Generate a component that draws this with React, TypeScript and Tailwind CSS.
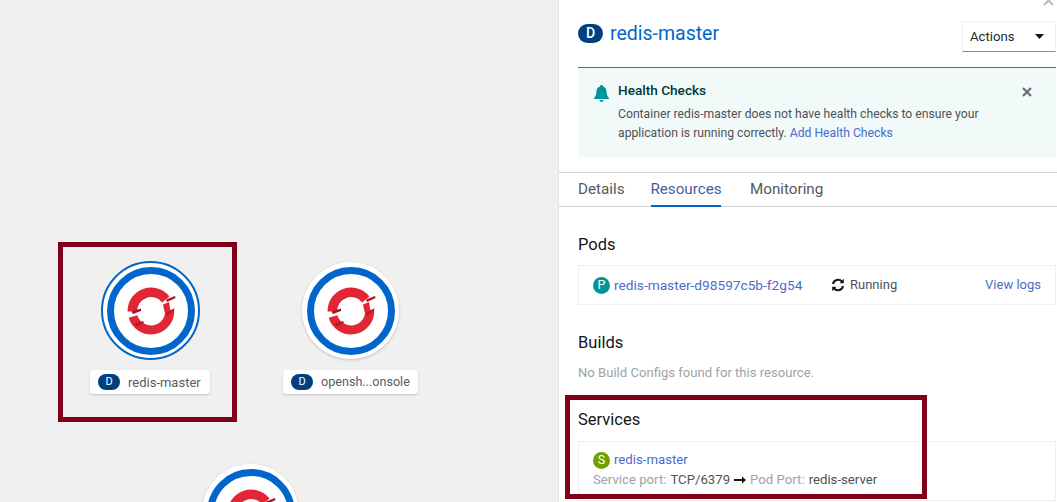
const font = { fontFamily: "Roboto, 'Liberation Sans', sans-serif" };

function Logo() {
  // OpenShift mark: two interlocking arcs with darker fold marks
  return (
    <svg width="60" height="60" viewBox="-30 -30 60 60" className="block">
      <path d="M 14.8 -11.5 A 18.75 18.75 0 0 0 -18.7 0.5" fill="none" stroke="#e12634" strokeWidth="9.5" />
      <path d="M -18 5.5 A 18.75 18.75 0 0 0 18.7 -1" fill="none" stroke="#e12634" strokeWidth="9" />
      <path d="M 12 -6.5 L 18 -9 L 19.5 0 L 14 3 Z" fill="#e12634" />
      <path d="M 15 -11.5 L 24 -15 L 24.5 -13 L 16 -9 Z" fill="#a8142a" />
      <path d="M 15 2.5 L 23.5 -3 L 23 -0.5 L 15.5 5 Z" fill="#b51a2c" />
      <path d="M -19.5 0.5 L -10 -2.5 L -10 0 L -18 3 Z" fill="#a8142a" />
      <path d="M -17 13 L -8 10 L -7 12 L -14 15.5 Z" fill="#b51a2c" />
    </svg>
  );
}

function Node({ left, top, selected }: { left: number; top: number; selected?: boolean }) {
  return (
    <div
      className={
        selected
          ? "absolute flex h-[99px] w-[99px] items-center justify-center rounded-full border-2 border-[#06c] bg-white"
          : "absolute flex h-[97px] w-[97px] items-center justify-center rounded-full bg-white shadow-[0_1px_3px_rgba(3,3,3,0.2)]"
      }
      style={{ left, top }}
    >
      <div className="flex h-[88px] w-[88px] shrink-0 items-center justify-center rounded-full border-[7px] border-[#06c] bg-white">
        <Logo />
      </div>
    </div>
  );
}

function NodeLabel({ left, width, text, size }: { left: number; width: number; text: string; size: number }) {
  return (
    <div
      className="absolute top-[370px] flex h-6 items-center rounded-[3px] bg-white pl-2 text-[#5a5d60] shadow-[0_1px_2px_rgba(3,3,3,0.2)]"
      style={{ left, width, fontSize: size }}
    >
      <span className="mr-2 flex h-4 w-[22px] items-center justify-center rounded-full bg-[#004080] text-[11px] text-white">D</span>
      <span className="pt-px">{text}</span>
    </div>
  );
}

function Badge({ letter, color }: { letter: string; color: string }) {
  return (
    <span
      className="mr-1 flex h-[17px] w-[17px] shrink-0 items-center justify-center rounded-full text-[12.5px] text-white"
      style={{ backgroundColor: color }}
    >
      {letter}
    </span>
  );
}

function Heading({ children }: { children: string }) {
  return <h2 className="text-[16.5px] leading-5 text-[#151515]">{children}</h2>;
}

export default function App() {
  return (
    <div className="relative flex h-[502px] w-[1057px] overflow-hidden bg-white" style={font}>
      <div className="relative h-full w-[558px] shrink-0 bg-[#f0f0f0]">
        <Node left={101} top={261} selected />
        <NodeLabel left={90} width={120} text="redis-master" size={13} />
        <Node left={302} top={262} />
        <NodeLabel left={283} width={135} text="opensh...onsole" size={12.6} />
        <Node left={202} top={464} />
        <div className="absolute left-[58px] top-[242px] h-[180px] w-[179px] border-[5px] border-[#7f0018]" />
      </div>

      <div className="relative flex h-full min-w-0 flex-1 flex-col border-l border-[#e4e4e4]">
        <svg className="absolute right-[3px] top-[-5px]" width="11" height="11" viewBox="0 0 11 11">
          <path d="M1 1 L10 10 M10 1 L1 10" stroke="#b8bbbe" strokeWidth="2" />
        </svg>

        <div className="flex h-[67px] items-start justify-between pl-[19px] pr-px">
          <div className="mt-[23px] flex items-center">
            <span className="mr-[7px] flex h-[19px] w-[25px] items-center justify-center rounded-full bg-[#004080] text-[14px] font-medium text-white">D</span>
            <span className="pt-px text-[19.5px] leading-5 text-[#06c]">redis-master</span>
          </div>
          <div className="mt-[21px] flex h-[31px] w-[94px] items-center border border-[#f0f0f0] border-b-[#8a8d90] pl-[7px] text-[13.2px] text-[#2a2a2a]">
            Actions
            <svg className="ml-[20px]" width="9" height="5" viewBox="0 0 9 5">
              <path d="M0 0 H9 L4.5 5 Z" fill="#151515" />
            </svg>
          </div>
        </div>

        <div className="ml-[19px] mr-px flex h-[90px] border-t border-[#009596] bg-[#f2f9f9] pl-[16px] pt-[16px]">
          <svg className="mt-px shrink-0" width="15" height="17" viewBox="0 0 15 17">
            <path d="M7.5 0 C8.6 0 9 .7 9 1.4 C11.6 2 12.6 4.2 12.6 7 C12.6 10 13.6 11.4 15 13 V14 H0 V13 C1.4 11.4 2.4 10 2.4 7 C2.4 4.2 3.4 2 6 1.4 C6 .7 6.4 0 7.5 0 Z M5.4 15 H9.6 C9.4 16.2 8.6 17 7.5 17 C6.4 17 5.6 16.2 5.4 15 Z" fill="#009596" />
          </svg>
          <div className="ml-[9px] w-[404px] shrink-0">
            <div className="text-[13.6px] font-medium leading-[13px] text-[#003737]">Health Checks</div>
            <p className="mt-2 text-[12.2px] leading-[19px] text-[#4f5255]">
              Container redis-master does not have health checks to ensure your
              <br />
              application is running correctly. <span className="text-[#4a6cc8]">Add Health Checks</span>
            </p>
          </div>
          <svg className="mt-[3px] shrink-0" width="10" height="10" viewBox="0 0 10 10">
            <path d="M1 1 L9 9 M9 1 L1 9" stroke="#6a6e73" strokeWidth="2.2" />
          </svg>
        </div>

        <div className="mt-[15px] flex h-[35px] border-y border-[#d2d2d2] pl-[19px] text-[15.2px] text-[#55585b]">
          <div className="flex h-[33px] w-[46px] items-center">Details</div>
          <div className="-mb-px ml-[27px] flex h-[34px] w-[70px] items-center justify-center border-b-2 border-[#06c] text-[#3f5f9f]">Resources</div>
          <div className="ml-[29px] flex h-[33px] items-center">Monitoring</div>
        </div>

        <div className="flex flex-col pl-[19px] pr-px pt-[28px]">
          <Heading>Pods</Heading>
          <div className="mt-[10px] flex h-10 items-center border border-[#f0f0f0] pl-[14px] pr-[14px] text-[13px]">
            <Badge letter="P" color="#009596" />
            <span className="w-[217px] text-[13.7px] text-[#4a6cc8]">redis-master-d98597c5b-f2g54</span>
            <svg width="14" height="14" viewBox="0 0 14 14" fill="none" stroke="#151515" strokeWidth="2">
              <path d="M2 6 A5.2 5.2 0 0 1 11 3.5" />
              <path d="M12 8 A5.2 5.2 0 0 1 3 10.5" />
              <path d="M12.8 .8 V5.2 H8.6 Z M1.2 13.2 V8.8 H5.4 Z" fill="#151515" stroke="none" />
            </svg>
            <span className="ml-[5px] text-[#4f5255]">Running</span>
            <span className="ml-auto text-[#4a6cc8]">View logs</span>
          </div>

          <div className="mt-[28px]">
            <Heading>Builds</Heading>
          </div>
          <p className="mt-[11px] text-[13.1px] leading-[18px] text-[#a0a3a6]">No Build Configs found for this resource.</p>

          <div className="mt-[28px]">
            <Heading>Services</Heading>
          </div>
          <div className="mt-[11px] h-[60px] border border-[#f0f0f0] pl-[14px] pt-[8px] text-[13.2px] leading-[20px]">
            <div className="flex items-center">
              <Badge letter="S" color="#6ca100" />
              <span className="text-[#4a6cc8]">redis-master</span>
            </div>
            <div className="flex items-center">
              <span className="text-[#a0a3a6]">Service port:</span>
              <span className="ml-1 text-[#4f5255]">TCP/6379</span>
              <svg className="mx-[4px]" width="12" height="8" viewBox="0 0 12 8">
                <path d="M0 3 H8 V0.5 L12 4 L8 7.5 V5 H0 Z" fill="#151515" />
              </svg>
              <span className="text-[#a0a3a6]">Pod Port:</span>
              <span className="ml-1 text-[#4f5255]">redis-server</span>
            </div>
          </div>
        </div>
      </div>

      <div className="absolute left-[565px] top-[395px] h-[104px] w-[362px] border-[5px] border-[#7f0018]" />
    </div>
  );
}
